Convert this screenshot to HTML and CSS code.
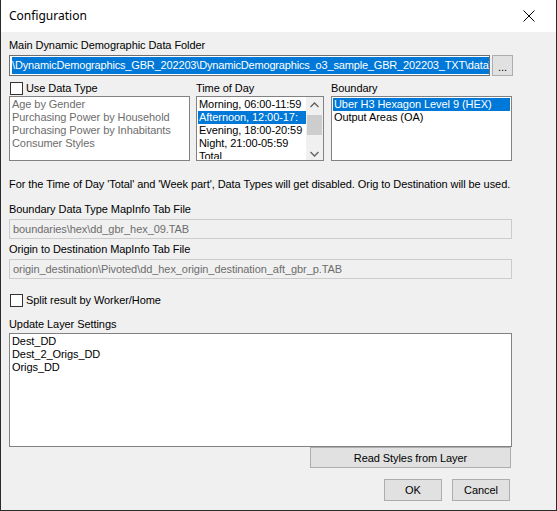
FILE: index.html
```html
<!DOCTYPE html>
<html>
<head>
<meta charset="utf-8">
<link rel="stylesheet" href="styles.css">
</head>
<body>
<div class="window">
  <div class="titlebar">
    <span class="title">Configuration</span>
    <svg class="close" width="12" height="12" viewBox="0 0 12 12"><path d="M0.5 0.5 L11.5 11.5 M11.5 0.5 L0.5 11.5" stroke="#000" stroke-width="1" fill="none"/></svg>
  </div>
  <div class="content">
    <div class="label l-main">Main Dynamic Demographic Data Folder</div>
    <div class="folder-row">
      <div class="input folder"><span class="sel">\DynamicDemographics_GBR_202203\DynamicDemographics_o3_sample_GBR_202203_TXT\data\</span></div>
      <div class="btn dots">...</div>
    </div>
    <div class="lists">
      <div class="col c1">
        <label class="check-row"><span class="checkbox"></span><span>Use Data Type</span></label>
        <div class="listbox lb1 disabled">
          <div class="item">Age by Gender</div>
          <div class="item">Purchasing Power by Household</div>
          <div class="item">Purchasing Power by Inhabitants</div>
          <div class="item">Consumer Styles</div>
        </div>
      </div>
      <div class="col c2">
        <div class="label">Time of Day</div>
        <div class="listbox lb2">
          <div class="items">
            <div class="item">Morning, 06:00-11:59</div>
            <div class="item selected">Afternoon, 12:00-17:</div>
            <div class="item">Evening, 18:00-20:59</div>
            <div class="item">Night, 21:00-05:59</div>
            <div class="item">Total</div>
          </div>
          <div class="scrollbar">
            <svg class="arrow" width="17" height="13" viewBox="0 0 17 13"><path d="M4.5 8 L8.5 4 L12.5 8" stroke="#606060" stroke-width="1.3" fill="none"/></svg>
            <div class="thumb"></div>
            <div class="track"></div>
            <svg class="arrow" width="17" height="13" viewBox="0 0 17 13"><path d="M4.5 5 L8.5 9 L12.5 5" stroke="#606060" stroke-width="1.3" fill="none"/></svg>
          </div>
        </div>
      </div>
      <div class="col c3">
        <div class="label">Boundary</div>
        <div class="listbox lb3">
          <div class="item selected">Uber H3 Hexagon Level 9 (HEX)</div>
          <div class="item">Output Areas (OA)</div>
        </div>
      </div>
    </div>
    <div class="label note">For the Time of Day 'Total' and 'Week part', Data Types will get disabled. Orig to Destination will be used.</div>
    <div class="label l-bound">Boundary Data Type MapInfo Tab File</div>
    <div class="input dis">boundaries\hex\dd_gbr_hex_09.TAB</div>
    <div class="label l-orig">Origin to Destination MapInfo Tab File</div>
    <div class="input dis">origin_destination\Pivoted\dd_hex_origin_destination_aft_gbr_p.TAB</div>
    <label class="check-row split"><span class="checkbox"></span><span>Split result by Worker/Home</span></label>
    <div class="label l-update">Update Layer Settings</div>
    <div class="listbox layers">
      <div class="item">Dest_DD</div>
      <div class="item">Dest_2_Origs_DD</div>
      <div class="item">Origs_DD</div>
    </div>
    <div class="read-row"><div class="btn read">Read Styles from Layer</div></div>
    <div class="footer">
      <div class="btn ok">OK</div>
      <div class="btn cancel">Cancel</div>
    </div>
  </div>
</div>
</body>
</html>
```
FILE: styles.css
```css
* { box-sizing: border-box; }
html, body { margin: 0; padding: 0; }
body { width: 557px; height: 511px; overflow: hidden; background: #f0f0f0; }
.window {
  width: 557px; height: 511px;
  border: 1px solid #2b2b2b; border-top: none;
  background: #f0f0f0;
  font-family: "Liberation Sans", Arial, sans-serif;
  font-size: 11px; color: #000; letter-spacing: -0.07px;
  display: flex; flex-direction: column;
}
.titlebar {
  height: 32px; background: #fff;
  display: flex; align-items: center; justify-content: space-between;
  padding: 0 21px 0 8px;
}
.title { font-family: "Noto Sans", sans-serif; font-size: 12px; color: #000; margin-top: -1px; letter-spacing: 0; }
.close { display: block; }
.content { padding: 0 0 0 8px; display: flex; flex-direction: column; }
.label { line-height: 13px; white-space: nowrap; }
.l-main { margin-top: 7px; }
.folder-row { display: flex; margin-top: 3px; height: 21px; }
.input {
  height: 20px; background: #fff; border: 1px solid #7a7a7a;
  line-height: 18px; padding: 0 2px; white-space: nowrap; overflow: hidden;
}
.folder { width: 481px; height: 21px; border-color: #6e6e6e; padding: 1px 2px; line-height: 17px; }
.sel { background: #0078d7; color: #fff; display: inline-block; line-height: 17px; height: 17px; letter-spacing: -0.17px; }
.btn {
  background: #e1e1e1; border: 1px solid #adadad;
  display: flex; align-items: center; justify-content: center;
}
.dots { width: 21px; height: 21px; margin-left: 2px; padding-top: 3px; }
.lists { display: flex; margin-top: 5px; }
.col { display: flex; flex-direction: column; }
.c1 { width: 181px; }
.c2 { width: 128px; margin-left: 6px; }
.c3 { width: 181px; margin-left: 7px; }
.check-row { display: flex; align-items: center; height: 14px; white-space: nowrap; }
.checkbox { width: 13px; height: 13px; border: 1px solid #333; background: #fff; margin: 0 3px 0 1px; }
.c2 .label, .c3 .label { height: 14px; line-height: 14px; }
.listbox { background: #fff; border: 1px solid #828282; height: 65px; margin-top: 1px; padding: 1px 2px; overflow: hidden; }
.listbox .item { line-height: 13px; height: 13px; white-space: nowrap; }
.disabled .item { color: #6d6d6d; }
.lb2 { display: flex; padding: 1px 0 1px 1px; }
.lb2 .items { width: 109px; overflow: hidden; }
.lb2 .item { padding-left: 1px; }
.selected { background: #0078d7; color: #fff; }
.lb3 { padding: 1px 1px; }
.lb3 .item { padding-left: 1px; }
.scrollbar { width: 17px; background: #f0f0f0; display: flex; flex-direction: column; margin-top: -1px; margin-bottom: -1px; }
.arrow { display: block; margin-top: 2px; }
.thumb { height: 20px; background: #cdcdcd; margin: 3px 1px 0 1px; }
.track { flex: 1; }
.note { margin-top: 17px; }
.l-bound { margin-top: 12px; }
.dis { width: 503px; margin-top: 3px; background: #f0f0f0; border-color: #cccccc; color: #6d6d6d; padding-left: 3px; }
.l-orig { margin-top: 4px; }
.split { margin-top: 14px; }
.l-update { margin-top: 11px; }
.layers { width: 503px; height: 114px; margin-top: 2px; padding: 1px 2px; }
.read-row { display: flex; justify-content: flex-end; width: 502px; }
.read { width: 201px; height: 21px; }
.footer { display: flex; justify-content: flex-end; width: 501px; margin-top: 11px; gap: 10px; }
.ok, .cancel { width: 58px; height: 22px; }
```
